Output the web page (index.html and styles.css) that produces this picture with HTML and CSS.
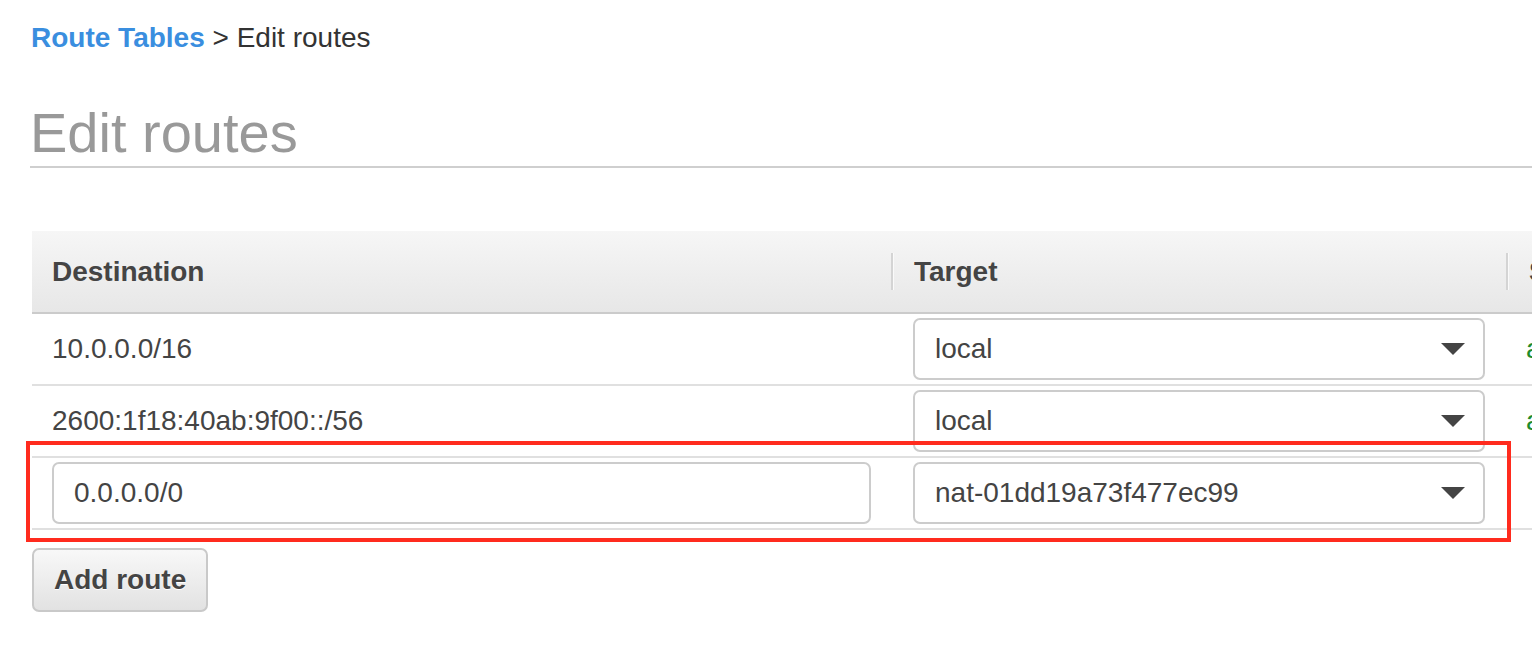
FILE: index.html
```html
<!DOCTYPE html>
<html>
<head>
<meta charset="utf-8">
<link rel="stylesheet" href="styles.css">
</head>
<body>
<div class="page">
  <div class="crumbs"><a class="crumb-link" href="#">Route Tables</a> &gt; Edit routes</div>
  <h1 class="title">Edit routes</h1>

  <div class="routes">
    <div class="row head">
      <div class="cell hcell">Destination</div>
      <div class="cell hcell sep">Target</div>
      <div class="cell hcell sep">Status</div>
    </div>
    <div class="row">
      <div class="cell text">10.0.0.0/16</div>
      <div class="cell"><div class="select"><span>local</span><span class="caret"></span></div></div>
      <div class="cell text status">active</div>
    </div>
    <div class="row">
      <div class="cell text">2600:1f18:40ab:9f00::/56</div>
      <div class="cell"><div class="select"><span>local</span><span class="caret"></span></div></div>
      <div class="cell text status">active</div>
    </div>
    <div class="row">
      <div class="cell"><div class="input">0.0.0.0/0</div></div>
      <div class="cell"><div class="select"><span>nat-01dd19a73f477ec99</span><span class="caret"></span></div></div>
      <div class="cell text"></div>
    </div>
    <div class="highlight"></div>
  </div>

  <button class="btn">Add route</button>
</div>
</body>
</html>
```
FILE: styles.css
```css
html, body {
  margin: 0;
  padding: 0;
  background: #fff;
  overflow: hidden;
}
body {
  font-family: "Liberation Sans", Arial, Helvetica, sans-serif;
  color: #444;
  width: 1532px;
  height: 648px;
}
.page {
  padding: 22px 0 0 30px;
}
.crumbs {
  font-size: 28px;
  line-height: 32px;
  color: #333;
  padding-left: 1px;
}
.crumb-link {
  color: #3a8edf;
  font-weight: bold;
  text-decoration: none;
}
.title {
  margin: 47px 0 0 0;
  font-size: 56px;
  line-height: 64px;
  font-weight: normal;
  color: #999;
  padding-bottom: 1px;
  border-bottom: 2px solid #cfcfcf;
}
.routes {
  position: relative;
  margin-top: 63px;
  margin-left: 2px;
  width: 1700px;
}
.row {
  display: grid;
  grid-template-columns: 859px 615px 226px;
  border-bottom: 2px solid #e0e0e0;
}
.head {
  height: 81px;
  background: linear-gradient(#f6f6f6, #e7e7e7);
  border-bottom: 2px solid #cbcbcb;
}
.cell {
  display: flex;
  align-items: center;
  padding: 4px 20px;
  font-size: 28px;
  box-sizing: border-box;
}
.hcell {
  font-weight: bold;
  color: #444;
  padding: 0 20px;
}
.sep {
  padding-left: 0;
}
.sep::before {
  content: "";
  width: 2px;
  height: 37px;
  background: #d4d4d4;
  border-right: 1px solid #fafafa;
  margin-right: 20px;
}
.text {
  height: 70px;
}
.row .cell:nth-child(2) {
  padding-left: 22px;
}
.head .cell:nth-child(2) {
  padding-left: 0;
}
.status {
  color: #1d8c2e;
}
.select, .input {
  box-sizing: border-box;
  height: 62px;
  border: 2px solid #cccccc;
  border-radius: 7px;
  background: #fff;
  display: flex;
  align-items: center;
  padding: 0 18px 0 20px;
  font-size: 28px;
  color: #444;
}
.select {
  width: 572px;
  justify-content: space-between;
}
.input {
  width: 819px;
}
.caret {
  width: 0;
  height: 0;
  border-left: 12px solid transparent;
  border-right: 12px solid transparent;
  border-top: 12px solid #444;
}
.highlight {
  position: absolute;
  left: -6px;
  top: 210px;
  width: 1485px;
  height: 101px;
  box-sizing: border-box;
  border: 4px solid #ff2b1e;
  pointer-events: none;
}
.btn {
  display: block;
  margin: 18px 0 0 2px;
  height: 64px;
  padding: 0 20px;
  border: 2px solid #c9c9c9;
  border-radius: 7px;
  background: linear-gradient(#f8f8f8, #e2e2e2);
  font-family: "Liberation Sans", Arial, Helvetica, sans-serif;
  font-weight: bold;
  font-size: 28px;
  color: #444;
  text-shadow: 0 1px 0 #fff;
}
```
